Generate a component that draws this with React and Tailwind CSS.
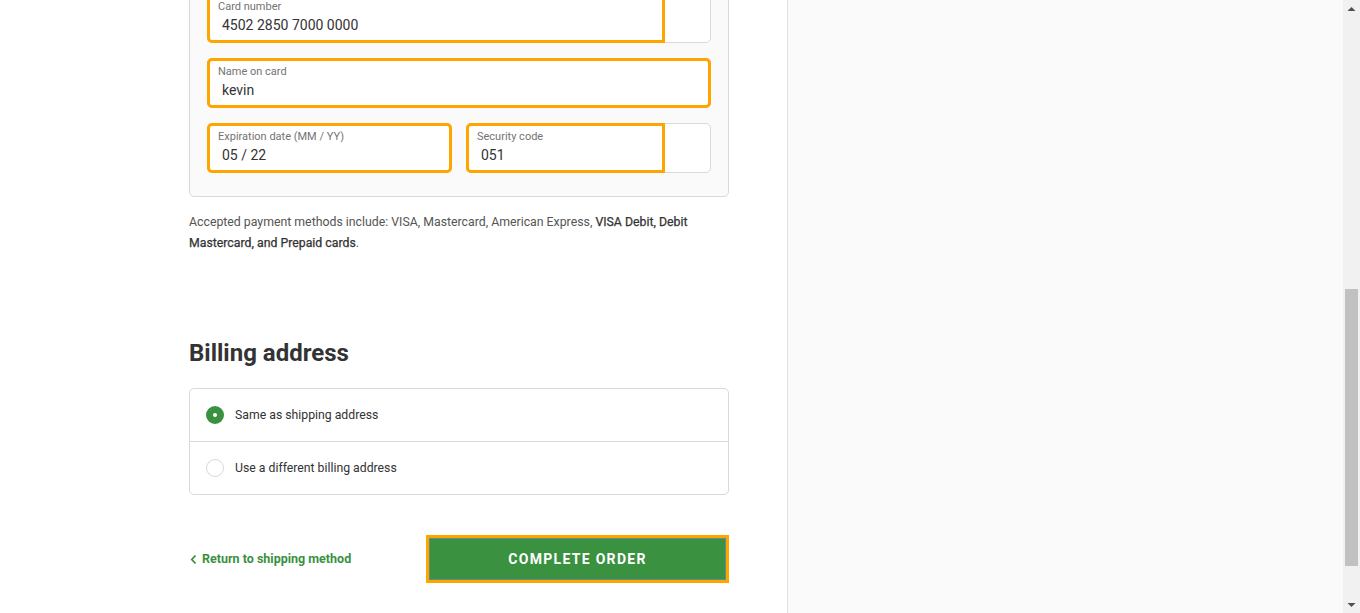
function Field({ label, value, innerWidth, className = "" }) {
    // gray wrapper with an orange focus outline around the real input part
    return (
        <div className={`flex h-[50px] rounded-[5px] border border-[#d9d9d9] bg-white ${className}`}>
            <div
                className={`-m-px flex flex-col rounded-[5px] border-[3px] border-[#ffa500] pl-[8px] ${
                    innerWidth ? "rounded-r-none" : "flex-1"
                }`}
                style={innerWidth ? { width: innerWidth } : undefined}
            >
                <span className="mt-[3px] text-[11px] leading-[15px] text-[#737373]">{label}</span>
                <span className="mt-[2px] pl-[4px] text-[14px] leading-[18px] text-[#333333]">{value}</span>
            </div>
        </div>
    );
}

function Radio({ checked, label, last }) {
    return (
        <label
            className={`flex items-center gap-[11px] px-[16px] ${
                last ? "h-[52px]" : "h-[53px] border-b border-[#d9d9d9]"
            }`}
        >
            {checked ? (
                <span className="flex h-[18px] w-[18px] items-center justify-center rounded-full bg-[#3a913f]">
                    <span className="h-[4px] w-[4px] rounded-full bg-white" />
                </span>
            ) : (
                <span className="h-[18px] w-[18px] rounded-full border border-[#d9d9d9] bg-white" />
            )}
            <span className="text-[12.25px] text-[#333333]">{label}</span>
        </label>
    );
}

export default function App() {
    return (
        <div className="flex h-[613px] w-[1360px] overflow-hidden bg-white font-['Roboto',sans-serif]">
            <main className="w-[787px] shrink-0 pl-[189px] pr-[58px]">
                <div className="-mt-[25px] flex flex-col gap-[15px] rounded-[5px] border border-[#d9d9d9] bg-[#fafafa] px-[17px] pt-[17px] pb-[23px]">
                    <Field label="Card number" value="4502 2850 7000 0000" innerWidth={458} />
                    <Field label="Name on card" value="kevin" />
                    <div className="flex gap-[14px]">
                        <Field label="Expiration date (MM / YY)" value="05 / 22" className="flex-1" />
                        <Field label="Security code" value="051" innerWidth={199} className="flex-1" />
                    </div>
                </div>

                <p className="mt-[15px] text-[12.3px] leading-[21px] text-[#545454]">
                    Accepted payment methods include: VISA, Mastercard, American Express,{" "}
                    <span className="text-[#333333] [-webkit-text-stroke:0.25px_#333333]">
                        VISA Debit, Debit Mastercard, and Prepaid cards
                    </span>
                    .
                </p>

                <h2 className="mt-[84px] text-[24px] leading-[30px] font-bold text-[#333333]">Billing address</h2>

                <div className="mt-[20px] rounded-[5px] border border-[#d9d9d9] bg-white">
                    <Radio checked label="Same as shipping address" />
                    <Radio label="Use a different billing address" last />
                </div>

                <div className="mt-[40px] flex items-center justify-between">
                    <a className="flex items-center gap-[5px] pl-[1px] text-[12.5px] font-bold text-[#3a913f]">
                        <svg width="7" height="11" viewBox="0 0 7 11" fill="none">
                            <path d="M5.5 1.5 L1.8 5.5 L5.5 9.5" stroke="#3a913f" strokeWidth="1.8" />
                        </svg>
                        Return to shipping method
                    </a>
                    <button className="h-[48px] w-[303px] border-[3px] border-[#ffa500] p-0">
                        <span className="flex h-full w-full items-center justify-center border border-[#5d8c8a] bg-[#3a913f] text-[14px] font-bold tracking-[1.3px] text-white">
                            COMPLETE ORDER
                        </span>
                    </button>
                </div>
            </main>

            <aside className="flex-1 border-l border-[#e1e1e1] bg-[#fafafa]" />

            <div className="flex w-[17px] shrink-0 flex-col items-center bg-[#f1f1f1]">
                <svg className="mt-[6px]" width="9" height="6" viewBox="0 0 9 6">
                    <path d="M0.5 5 L4.5 1 L8.5 5 Z" fill="#505050" />
                </svg>
                <div className="mt-[277px] h-[277px] w-[13px] bg-[#c1c1c1]" />
                <svg className="mt-auto mb-[5px]" width="9" height="6" viewBox="0 0 9 6">
                    <path d="M0.5 1 L4.5 5 L8.5 1 Z" fill="#505050" />
                </svg>
            </div>
        </div>
    );
}
